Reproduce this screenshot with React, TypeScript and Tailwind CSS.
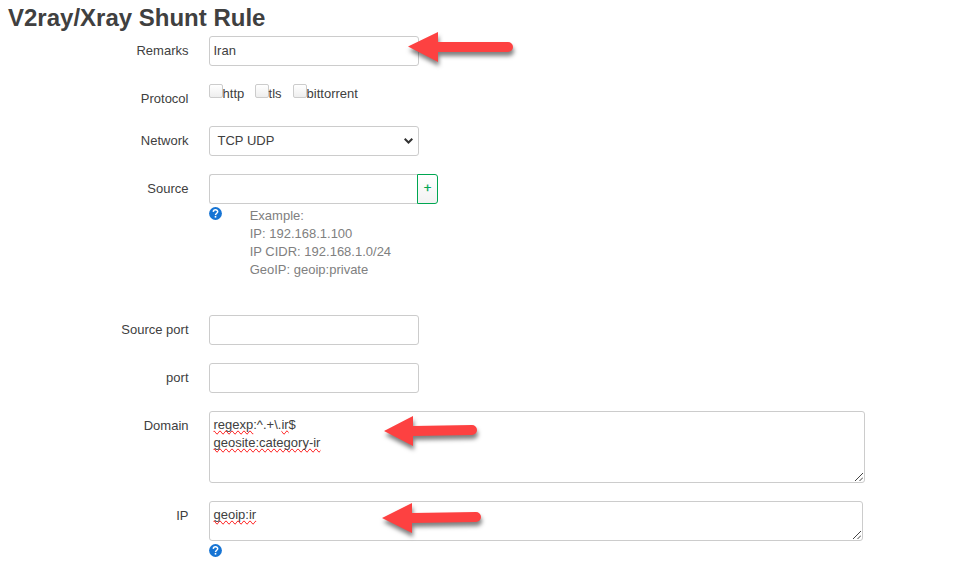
import type { ReactNode } from 'react';

const box = 'rounded-[3px] border border-[#ccc] bg-white';

function Row({ label, className, labelClass = 'pt-[6px]', children }: { label: string; className: string; labelClass?: string; children?: ReactNode }) {
  return (
    <div className={`flex ${className}`}>
      <div className={`mr-[20.5px] w-[188.5px] shrink-0 text-right ${labelClass}`}>{label}</div>
      <div className="relative">{children}</div>
    </div>
  );
}

function Check({ label, className }: { label: string; className: string }) {
  return (
    <label className={`flex ${className}`}>
      <span className="h-[14px] w-[14px] rounded-[2px] border border-[#ccc] bg-linear-to-b from-white to-[#eee]" />
      <span className="-ml-[0.4px] pt-[1px]">{label}</span>
    </label>
  );
}

function Spell({ children }: { children: ReactNode }) {
  return <span className="[text-decoration-line:spelling-error]">{children}</span>;
}

function Help({ className = '' }: { className?: string }) {
  return (
    <svg className={`h-[13px] w-[13px] shrink-0 ${className}`} viewBox="0 0 13 13">
      <circle cx="6.5" cy="6.5" r="6.4" fill="#1674d4" />
      <path d="M4.3 4.9C4.4 2.1 8.8 2.3 8.7 4.8C8.6 6.3 6.6 6.3 6.5 8.1" fill="none" stroke="#fff" strokeWidth="1.5" />
      <rect x="5.7" y="9" width="1.6" height="1.6" fill="#fff" />
    </svg>
  );
}

function Grip() {
  return (
    <svg className="absolute right-[1px] bottom-[1px] h-[8px] w-[8px]" viewBox="0 0 8 8">
      <path d="M0 8L8 0M4.5 8L8 4.5" stroke="#444" strokeWidth="1" fill="none" />
    </svg>
  );
}

function Arrow({ className, d, width }: { className: string; d: string; width: number }) {
  return (
    <svg className={`absolute overflow-visible drop-shadow-[1px_4px_2px_rgba(0,0,0,0.5)] ${className}`} width={width} height="30" viewBox={`0 0 ${width} 30`}>
      <path d={d} fill="#fd4141" />
    </svg>
  );
}

export default function App() {
  return (
    <div className="h-[563px] w-[969px] overflow-hidden bg-white font-['Liberation_Sans',Arial,sans-serif] text-[13px] leading-[18px] text-[#404040]">
      <h2 className="h-9 pl-2 text-[24px] leading-9 font-bold">V2ray/Xray Shunt Rule</h2>
      <Row label="Remarks" className="h-12">
        <div className={`h-[30px] w-[210px] pt-[5px] pl-[3.5px] ${box}`}>Iran</div>
        <Arrow className="top-[-4px] left-[199px]" width={105} d="M0 14.5L30 0V10H100A5 5 0 0 1 100 20H30V30Z" />
      </Row>
      <Row label="Protocol" className="h-[42px]">
        <div className="flex">
          <Check label="http" className="w-[46px]" />
          <Check label="tls" className="w-[38px]" />
          <Check label="bittorrent" className="" />
        </div>
      </Row>
      <Row label="Network" className="h-12">
        <div className={`flex h-[30px] w-[210px] items-center justify-between pr-[5px] pl-[7.5px] ${box}`}>
          <span>TCP UDP</span>
          <svg className="h-[6px] w-[9px]" viewBox="0 0 9 6">
            <path d="M0.7 0.8L4.5 4.5L8.3 0.8" fill="none" stroke="#333" strokeWidth="2" />
          </svg>
        </div>
      </Row>
      <Row label="Source" className="h-[141px]">
        <div className="flex">
          <div className="h-[30px] w-[208px] rounded-l-[3px] border border-r-0 border-[#ccc]" />
          <div className="h-[30px] w-[21px] rounded-r-[3px] border border-[#00a651] bg-linear-to-b from-white to-[#f2f2f2] pt-[4px] text-center text-[#00a651] [-webkit-text-stroke:0.3px_#00a651]">+</div>
        </div>
        <div className="flex pt-[3px] text-[#808080]">
          <Help />
          <div className="pl-[27.7px]">
            <div>Example:</div>
            <div>IP: 192.168.1.100</div>
            <div>IP CIDR: 192.168.1.0/24</div>
            <div>GeoIP: geoip:private</div>
          </div>
        </div>
      </Row>
      <Row label="Source port" className="h-12">
        <div className={`h-[30px] w-[210px] ${box}`} />
      </Row>
      <Row label="port" className="h-12">
        <div className={`h-[30px] w-[210px] ${box}`} />
      </Row>
      <Row label="Domain" className="h-[90px]">
        <div className={`relative h-[72px] w-[656px] pt-1 pl-[3.5px] ${box}`}>
          <div><Spell>regexp</Spell>:^.+\.<Spell>ir</Spell>$</div>
          <div><Spell>geosite:category-ir</Spell></div>
          <Grip />
        </div>
        <Arrow className="top-[5px] left-[175px]" width={93} d="M0 15L29 0V10L88 9A5 5 0 0 1 88 19L29 20V30Z" />
      </Row>
      <Row label="IP" className="h-[62px]">
        <div className={`relative h-10 w-[654px] pt-1 pl-[3.5px] ${box}`}>
          <Spell>geoip:ir</Spell>
          <Grip />
        </div>
        <Help className="mt-[3px]" />
        <Arrow className="top-[2px] left-[173px]" width={99} d="M0 15L30 0V10L94 9A5 5 0 0 1 94 19L30 20V30Z" />
      </Row>
    </div>
  );
}
